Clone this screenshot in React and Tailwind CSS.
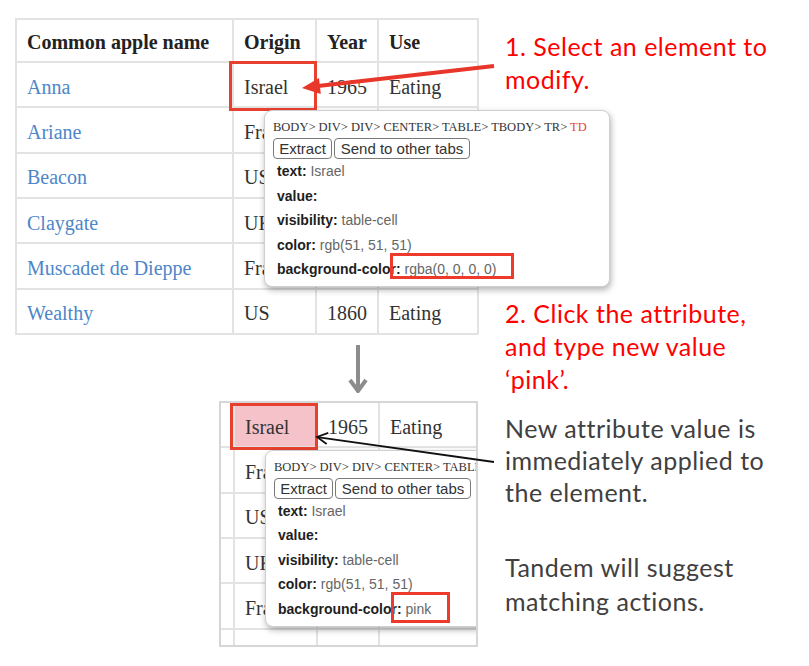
import React from 'react';

const rows = [
  ['Anna', 'Israel', '1965', 'Eating'],
  ['Ariane', 'France', '2002', 'Eating'],
  ['Beacon', 'US', '1936', 'Eating'],
  ['Claygate', 'UK', '1822', 'Eating'],
  ['Muscadet de Dieppe', 'France', '1750', 'Cider'],
  ['Wealthy', 'US', '1860', 'Eating'],
];

const attrs = [
  ['text:', 'Israel'],
  ['value:', ''],
  ['visibility:', 'table-cell'],
  ['color:', 'rgb(51, 51, 51)'],
];

function Inspector({ bgValue, pink }) {
  return (
    <div className="absolute left-[249px] top-[92px] z-10 w-[346px] h-[177px] rounded-[8px] border border-[#cfcfcf] bg-white pt-[9px] px-[8px] shadow-[1px_3px_6px_rgba(0,0,0,0.3)] font-['Liberation_Sans',Arial,sans-serif]">
      <div className="h-[14px] leading-[14px] text-[12.5px] text-[#333] font-['Liberation_Serif',serif] whitespace-nowrap">
        BODY&gt; DIV&gt; DIV&gt; CENTER&gt; TABLE&gt; TBODY&gt; TR&gt; <span className="text-[#e8443a]">TD</span>
      </div>
      <div className="mt-[4px] flex gap-[2px]">
        <button className="h-[21px] w-[59px] rounded-[4px] border border-[#7a7a7a] bg-white text-[15px] leading-[19px] text-[#333]">Extract</button>
        <button className="h-[21px] w-[136px] rounded-[4px] border border-[#7a7a7a] bg-white text-[15px] leading-[19px] text-[#333]">Send to other tabs</button>
      </div>
      <div className="pl-[4px] text-[14px]">
        {attrs.map(([k, v]) => (
          <div key={k} className="h-[24.5px] leading-[24.5px] whitespace-nowrap">
            <span className="font-bold text-[#1e1e1e]">{k}</span> <span className="text-[#666]">{v}</span>
          </div>
        ))}
        <div className="h-[24.5px] leading-[24.5px] whitespace-nowrap">
          <span className="font-bold text-[#1e1e1e]">background-color:</span> <span className="text-[#666]">{bgValue}</span>
        </div>
      </div>
      {/* highlighted value */}
      {pink ? (
        <div className="absolute left-[125px] top-[141px] w-[59px] h-[31px] border-[3px] border-[#ee3a2a]" />
      ) : (
        <div className="absolute left-[125px] top-[142px] w-[124px] h-[26px] border-[3px] border-[#ee3a2a]" />
      )}
    </div>
  );
}

function AppleTable({ pink }) {
  const cell = "relative z-[1] flex items-center pl-[10px] border-r-2 border-b-2 border-[#e3e3e3] whitespace-nowrap";
  return (
    <div className="relative w-[464px]">
      <div className="grid grid-cols-[217px_83px_62px_100px] border-l-2 border-t-2 border-[#e3e3e3] font-['Liberation_Serif',serif] text-[20px]">
        {['Common apple name', 'Origin', 'Year', 'Use'].map((h) => (
          <div key={h} className={cell + " h-[43px] pt-[2px] font-bold text-[#222]"}>{h}</div>
        ))}
        {rows.map((r) => (
          <React.Fragment key={r[0]}>
            <div className={cell + " h-[45.33px] pt-[4px] text-[#4d86c9]"}>{r[0]}</div>
            <div className={cell + " h-[45.33px] pt-[4px] text-[#333]"}>{r[1]}</div>
            <div className={cell + " h-[45.33px] pt-[4px] text-[#333]"}>{r[2]}</div>
            <div className={cell + " h-[45.33px] pt-[4px] text-[#333]"}>{r[3]}</div>
          </React.Fragment>
        ))}
      </div>
      {pink && <div className="absolute left-[214px] top-[45px] z-0 w-[88px] h-[47px] bg-[#f6c2ca]" />}
      <div className={"absolute left-[214px] z-[2] w-[88px] border-[3px] border-[#e8402f] " + (pink ? "top-[45px] h-[47px]" : "top-[43px] h-[50px]")} />
      <Inspector pink={pink} bgValue={pink ? 'pink' : 'rgba(0, 0, 0, 0)'} />
    </div>
  );
}

export default function App() {
  return (
    <div className="relative w-[809px] h-[666px] overflow-hidden bg-white">
      <div className="flex">
        {/* left: table, arrow, cropped result */}
        <div className="w-[505px] shrink-0 flex flex-col">
          <div className="ml-[15px] mt-[18px]">
            <AppleTable />
          </div>
          <svg className="ml-[348px] mt-[10px]" width="20" height="48" viewBox="0 0 20 48">
            <line x1="10" y1="0" x2="10" y2="46" stroke="#8c8c8c" strokeWidth="4" />
            <polyline points="2,35 10,46 18,35" fill="none" stroke="#8c8c8c" strokeWidth="4" strokeLinejoin="miter" />
          </svg>
          <div className="ml-[219px] mt-[8px] w-[259px] h-[246px] overflow-hidden border-2 border-[#d6d6d6]">
            <div className="-ml-[205px] -mt-[45px]">
              <AppleTable pink />
            </div>
          </div>
        </div>

        {/* right: notes */}
        <div className="flex flex-col font-['Lato',sans-serif] text-[25px] tracking-[0.5px] whitespace-nowrap">
          <p className="mt-[30px] leading-[33px] text-[#ff0000]">
            1. Select an element to<br />modify.
          </p>
          <p className="mt-[201px] leading-[33px] text-[#ff0000]">
            2. Click the attribute,<br />and type new value<br />‘pink’.
          </p>
          <p className="mt-[16px] leading-[32px] text-[#404040]">
            New attribute value is<br />immediately applied to<br />the element.
          </p>
          <p className="mt-[42px] leading-[34px] text-[#404040]">
            Tandem will suggest<br />matching actions.
          </p>
        </div>
      </div>

      {/* pointer arrows */}
      <svg className="pointer-events-none absolute inset-0 z-20" width="809" height="666" viewBox="0 0 809 666">
        <line x1="494" y1="66" x2="318" y2="86" stroke="#e8372a" strokeWidth="4" />
        <polygon points="302,88 320.8,93.9 319,78" fill="#e8372a" />
        <line x1="494" y1="462" x2="319" y2="437.3" stroke="#111" strokeWidth="1.8" />
        <polyline points="326.7,444.1 317,437 328.3,432.9" fill="none" stroke="#111" strokeWidth="1.8" />
      </svg>
    </div>
  );
}
